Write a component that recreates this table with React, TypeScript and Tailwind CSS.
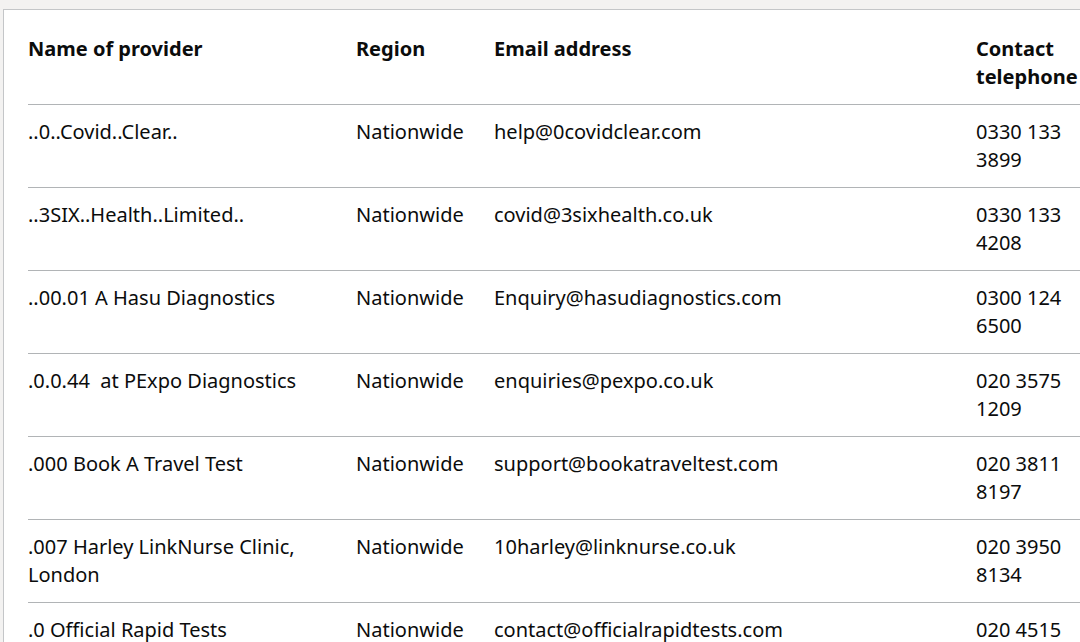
const providers = [
  { name: '..0..Covid..Clear..', region: 'Nationwide', email: 'help@0covidclear.com', phone: '0330 133 3899' },
  { name: '..3SIX..Health..Limited..', region: 'Nationwide', email: 'covid@3sixhealth.co.uk', phone: '0330 133 4208' },
  { name: '..00.01 A Hasu Diagnostics', region: 'Nationwide', email: 'Enquiry@hasudiagnostics.com', phone: '0300 124 6500' },
  { name: '.0.0.44  at PExpo Diagnostics', region: 'Nationwide', email: 'enquiries@pexpo.co.uk', phone: '020 3575 1209' },
  { name: '.000 Book A Travel Test', region: 'Nationwide', email: 'support@bookatraveltest.com', phone: '020 3811 8197' },
  { name: '.007 Harley LinkNurse Clinic, London', region: 'Nationwide', email: '10harley@linknurse.co.uk', phone: '020 3950 8134' },
  { name: '.0 Official Rapid Tests', region: 'Nationwide', email: 'contact@officialrapidtests.com', phone: '020 4515 2870' },
]

const th = 'border-b border-[#b1b4b6] py-[13px] pr-5 text-left align-top font-bold'
const td = 'border-b border-[#b1b4b6] py-[13px] pr-5 text-left align-top font-normal whitespace-pre-wrap'

export default function App() {
  return (
    <div className="h-[642px] w-[1080px] overflow-hidden bg-[#f3f2f1] pl-[3px] pt-[9px] font-['Noto_Sans',sans-serif] text-[20px] leading-[28px] text-[#0b0c0c]">
      <div className="h-full w-[1200px] border-l border-t border-[#c4c6c8] bg-white pl-6 pt-3">
        <table className="w-[1078px] table-fixed border-collapse">
          <colgroup>
            <col className="w-[328px]" />
            <col className="w-[138px]" />
            <col className="w-[482px]" />
            <col className="w-[130px]" />
          </colgroup>
          <thead>
            <tr>
              <th className={th}>Name of provider</th>
              <th className={th}>Region</th>
              <th className={th}>Email address</th>
              <th className={th}>Contact telephone</th>
            </tr>
          </thead>
          <tbody>
            {providers.map((p) => (
              <tr key={p.email}>
                <td className={td}>{p.name}</td>
                <td className={td}>{p.region}</td>
                <td className={td}>{p.email}</td>
                <td className={td}>{p.phone}</td>
              </tr>
            ))}
          </tbody>
        </table>
      </div>
    </div>
  )
}
